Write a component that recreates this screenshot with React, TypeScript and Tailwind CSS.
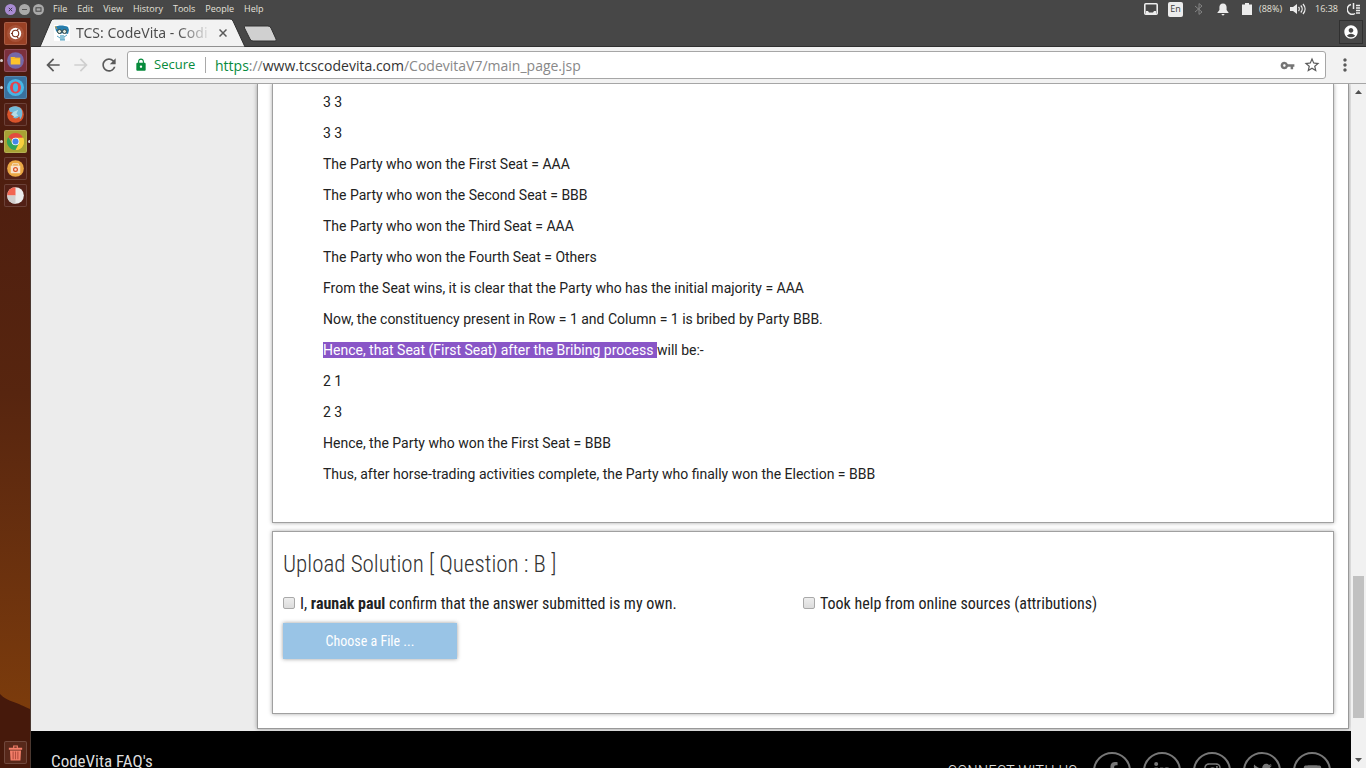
import React from "react";
import { FaFacebookF, FaLinkedinIn, FaInstagram, FaTwitter, FaYoutube } from "react-icons/fa";
import { MdAccountCircle, MdArrowBack, MdArrowForward, MdLock, MdMoreVert, MdRefresh, MdStarBorder, MdVpnKey } from "react-icons/md";

const menus = ["File", "Edit", "View", "History", "Tools", "People", "Help"];

const linesBefore = [
  "3 3",
  "3 3",
  "The Party who won the First Seat = AAA",
  "The Party who won the Second Seat = BBB",
  "The Party who won the Third Seat = AAA",
  "The Party who won the Fourth Seat = Others",
  "From the Seat wins, it is clear that the Party who has the initial majority = AAA",
  "Now, the constituency present in Row = 1 and Column = 1 is bribed by Party BBB.",
];

const linesAfter = [
  "2 1",
  "2 3",
  "Hence, the Party who won the First Seat = BBB",
  "Thus, after horse-trading activities complete, the Party who finally won the Election = BBB",
];

function WindowButtons() {
  return (
    <div className="flex gap-[3px] pl-[5px]">
      <button aria-label="Close" className="size-[11px]">
        <svg viewBox="0 0 11 11"><circle cx="5.5" cy="5.5" r="5.5" fill="#a98cd3" /><path d="M3.8 3.8l3.4 3.4M7.2 3.8L3.8 7.2" stroke="#3e3650" /></svg>
      </button>
      <button aria-label="Minimize" className="size-[11px]">
        <svg viewBox="0 0 11 11"><circle cx="5.5" cy="5.5" r="5.5" fill="#a9a9a9" /><path d="M3 5.5h5" stroke="#555" /></svg>
      </button>
      <button aria-label="Maximize" className="size-[11px]">
        <svg viewBox="0 0 11 11"><circle cx="5.5" cy="5.5" r="5.5" fill="#a9a9a9" /><rect x="3" y="3.8" width="5" height="3.4" fill="none" stroke="#444" /></svg>
      </button>
    </div>
  );
}

function TopBar() {
  return (
    <header className="flex h-[18px] shrink-0 items-center bg-[#474747] font-['Open_Sans',sans-serif] text-[9px] text-[#e4e1da]">
      <WindowButtons />
      <nav className="flex gap-[10px] pl-[9px]">
        {menus.map((m) => <button key={m}>{m}</button>)}
      </nav>
      <div className="ml-auto flex items-center pr-[5px]">
        <svg className="mr-[10px] h-3 w-[14px]" viewBox="0 0 14 12"><rect x=".8" y=".8" width="12.4" height="10.4" rx="1" fill="none" stroke="#ececec" strokeWidth="1.6" /><path d="M2 8h2l1 1.500h4L10 8h2v3H2z" fill="#ececec" /></svg>
        <span className="mr-[11px] flex h-[15px] w-[15px] items-center justify-center rounded-[2px] bg-[#ececec] text-[#3c3c3c]">En</span>
        <svg className="mr-[13px] h-3 w-[10px]" viewBox="0 0 10 12" fill="none" stroke="#858585"><path d="M1 3l7 6-3 2.4V.6L8 3 1 9" /></svg>
        <svg className="mr-[13px] h-[13px] w-3" viewBox="0 0 12 13" fill="#ececec"><path d="M6 .5c2.6 0 3.6 1.7 3.6 4v2.6L11.8 10H.2l2.2-2.900V4.500C2.400 2.200 3.400.5 6 .5zM4.200 11h3.600L6 12.800z" /></svg>
        <svg className="mr-[7px] h-3 w-[10px]" viewBox="0 0 10 12" fill="#ececec"><path d="M0 1.500h3V0h4v1.500h3V12H0z" /></svg>
        <span className="mr-[8px]">(88%)</span>
        <svg className="mr-[9px] h-3 w-4" viewBox="0 0 16 12" fill="none" stroke="#ececec" strokeWidth="1.300"><path d="M0 4h3l4-3v10L3 8H0z" fill="#ececec" stroke="none" /><path d="M8.500 4c1 1 1 3 0 4M10.800 2.500c1.800 2 1.800 5 0 7M13 1c2.700 3 2.700 7 0 10" /></svg>
        <span className="mr-[9px]">16:38</span>
        <svg className="h-3 w-[14px]" viewBox="0 0 14 12" fill="none" stroke="#ececec" strokeWidth="1.500"><path d="M4 1.500a5 5 0 1 0 4 9M6.500 0v6M9 2.500h4M9 5h4M9 7.500h4M9 10h4" /></svg>
      </div>
    </header>
  );
}

function Tile({ label, tile, marks, children }: { label: string; tile: string; marks?: string; children: React.ReactNode }) {
  return (
    <button aria-label={label} className={`relative flex size-[23px] items-center justify-center rounded-[2px] border border-white/15 ${tile}`}>
      <svg viewBox="0 0 20 20" className="size-[19px]">{children}</svg>
      {marks && <span className="absolute top-[9px] -left-[5px] size-[3px] rounded-full bg-white/80" />}
      {marks === "both" && <span className="absolute top-[9px] -right-[5px] size-[3px] rounded-full bg-white/80" />}
    </button>
  );
}

function Launcher() {
  return (
    <aside className="relative flex w-[31px] shrink-0 flex-col items-center gap-1 overflow-hidden border-r border-[#4b3830] bg-linear-to-b from-[#48190f] via-[#57250f] to-[#83400a] pt-1 pb-1">
      <svg className="absolute bottom-0 left-0 h-[115px] w-full" viewBox="0 0 31 115" preserveAspectRatio="none"><path d="M0 41c4 4 8 6 14 8 6 2 10 4 17 7v59H0z" fill="#46190b" /></svg>
      <Tile label="Search your computer" tile="bg-[#9a4125]">
        <circle cx="10" cy="10" r="9" fill="#b9694f" opacity=".45" /><circle cx="10" cy="10" r="6" fill="#fff" /><circle cx="10" cy="10" r="3.400" fill="none" stroke="#7b3421" strokeWidth="1.200" /><path d="M5.200 10h2M11.800 6.700l1-1.700M11.800 13.300l1 1.700" stroke="#7b3421" strokeWidth="1.300" />
      </Tile>
      <Tile label="Files" tile="bg-[#7c303d]" marks="left">
        <circle cx="10" cy="10" r="8.800" fill="#7569a8" /><path d="M5 6.200h4l1 1h5v7H5z" fill="#fdc52c" /><path d="M5 7.500h10" stroke="#e9a51e" strokeWidth=".6" />
      </Tile>
      <Tile label="Opera" tile="bg-[#3a719e]" marks="left">
        <circle cx="10" cy="10" r="9" fill="#46b5e5" /><ellipse cx="10" cy="10" rx="5.800" ry="6.300" fill="#e4434e" /><ellipse cx="10" cy="10" rx="2.700" ry="4.500" fill="#46b5e5" />
      </Tile>
      <Tile label="Firefox" tile="bg-[#522016]">
        <circle cx="10" cy="10" r="8.800" fill="#d9542b" /><path d="M3 4c2-3 8-4 12-1 3 3 3 9 0 12-1-1 0-2-1-3-2 2-4 3-7 1l2-1-4-2 2-2-3-1z" fill="#72bada" /><path d="M8 7l5-2-2 4 2 2-4 2-3-3z" fill="#b5dce6" />
      </Tile>
      <Tile label="Chrome" tile="bg-[#a8a234]" marks="both">
        <path d="M10 10L2.200 5.500A9 9 0 0 1 17.800 5.500z" fill="#e24b3f" /><path d="M10 10l8-4A9 9 0 0 1 10 19z" fill="#f9cf3d" /><path d="M10 6h8a9 9 0 0 1-8 13l3.500-7z" fill="#f9cf3d" /><path d="M2.200 5.500L6.500 12l7 0L10 19A9 9 0 0 1 2.200 5.500z" fill="#31a457" /><circle cx="10" cy="10" r="4" fill="#fff" /><circle cx="10" cy="10" r="3.200" fill="#4385e8" />
      </Tile>
      <Tile label="Software" tile="bg-[#522016]">
        <circle cx="10" cy="10" r="8.800" fill="#eba844" /><path d="M5 7h10v8H5z" fill="#f8e4cd" /><path d="M7 7V5h6v2" fill="none" stroke="#f8e4cd" /><circle cx="10" cy="11" r="2" fill="none" stroke="#db5428" strokeWidth="1.300" />
      </Tile>
      <Tile label="Disk usage" tile="bg-[#522016]">
        <circle cx="10" cy="10" r="8.800" fill="#ececec" /><path d="M10 10V1.200A8.800 8.800 0 0 0 1.200 10z" fill="#f26552" /><path d="M10 10v8.800A8.800 8.800 0 0 1 1.200 10z" fill="#d1cfce" />
      </Tile>
      <div className="mt-auto">
        <Tile label="Trash" tile="bg-[#57281a]">
          <path d="M3 5h14v2H3zM7.500 2.500h5V5h-1.200V3.800H8.700V5H7.500zM4.200 8h11.600l-.6 10.500H4.800z" fill="#f37e69" /><path d="M7.500 9v8M10 9v8M12.500 9v8" stroke="#b54d3e" strokeWidth="1.200" />
        </Tile>
      </div>
    </aside>
  );
}

function TabStrip() {
  return (
    <div className="flex h-[29px] shrink-0 border-b border-[#2f2f2f] bg-[#474747]">
      <div className="relative ml-[9px] h-[29px] w-[206px]">
        <svg className="absolute inset-0 h-[29px] w-[206px]" viewBox="0 0 206 29"><path d="M0 29L11 3q1-2 3-2h176q2 0 3 2l12 26z" fill="#f2f2f2" stroke="#2f2f2f" /></svg>
        <div className="relative flex h-full items-center pl-[14px]">
          <svg className="size-4" viewBox="0 0 16 16"><path fill="#fff" d="M0 0h16v16H0z" /><path d="M1 2c3-2 9-2 13 0l1 3-1 4-4-1-5 1-3-3z" fill="#267dad" /><circle cx="5.500" cy="6.500" r="2" fill="#e0e8dc" stroke="#344747" /><circle cx="10.500" cy="6.500" r="2" fill="#e0e8dc" stroke="#344747" /><path d="M6 10h4l1 5H6z" fill="#8bc4d9" /><path d="M3 11l3 2M13 10l-3 2M6 15h5" stroke="#59a4c2" /><path d="M1 1l2 3" stroke="#c79f48" /></svg>
          <span className="ml-[6px] w-[136px] overflow-hidden bg-linear-to-r from-[#4b4b4b] from-75% to-transparent bg-clip-text text-[14px] leading-5 whitespace-nowrap text-transparent">TCS: CodeVita - Codi</span>
          <button aria-label="Close tab" className="ml-[7px]"><svg className="size-2" viewBox="0 0 8 8"><path d="M.5.5l7 7M7.500.5l-7 7" stroke="#5a5a5a" strokeWidth="1.500" /></svg></button>
        </div>
      </div>
      <button aria-label="New tab" className="-ml-[3px] self-start pt-[7px]">
        <svg className="h-[17px] w-[36px]" viewBox="0 0 36 17"><path d="M2 1h23q2 0 3 2l5 11q1 2-1 2H10q-2 0-3-2L1.500 3Q1 1 2 1z" fill="#d0d0d0" stroke="#303030" /></svg>
      </button>
      <button aria-label="Profile" className="mt-[2px] mr-[3px] ml-auto flex h-6 w-6 items-center justify-center border border-[#303030] text-[16px] text-white"><MdAccountCircle /></button>
    </div>
  );
}

function Toolbar() {
  return (
    <div className="flex h-[37px] shrink-0 items-center border-b border-[#a6a6a6] bg-[#f2f2f2] pr-[13px] pl-[12px] text-[20px] text-[#5a5a5a]">
      <button aria-label="Back"><MdArrowBack /></button>
      <button aria-label="Forward" className="ml-2 text-[#cfcfcf]"><MdArrowForward /></button>
      <button aria-label="Reload" className="ml-2"><MdRefresh /></button>
      <div className="ml-2 flex h-7 min-w-0 flex-1 items-center rounded-[3px] border border-[#a6a6a6] bg-white pr-1 pl-[6px] font-['Open_Sans',sans-serif] text-[14px]">
        <MdLock className="text-[14px] text-[#078b3c]" />
        <span className="ml-[6px] w-[44px] text-[13px] text-[#078b3c]">Secure</span>
        <span className="mx-[7px] h-4 w-px bg-[#a9a9a9]" />
        <span className="ml-[2px] flex-1 truncate text-[#888]"><span className="text-[#078b3c]">https</span>://<span className="text-[#333]">www.tcscodevita.com</span>/CodevitaV7/main_page.jsp</span>
        <button aria-label="Saved password"><MdVpnKey className="text-[15px] text-[#757575]" /></button>
        <button aria-label="Bookmark" className="ml-2"><MdStarBorder className="text-[18px]" /></button>
      </div>
      <button aria-label="Menu" className="-mr-[2px] ml-[9px]"><MdMoreVert className="text-[20px]" /></button>
    </div>
  );
}

function Scrollbar() {
  return (
    <div className="flex w-[15px] shrink-0 flex-col items-center bg-[#f1f1f1]">
      <svg className="mt-[6px] h-1 w-[7px] shrink-0" viewBox="0 0 7 4"><path d="M0 4L3.500 0 7 4z" fill="#505050" /></svg>
      <div className="flex-1" />
      <div className="h-[142px] w-[11px] bg-[#c1c1c1]" />
      <svg className="mt-[40px] mb-[6px] h-1 w-[7px] shrink-0" viewBox="0 0 7 4"><path d="M0 0l3.500 4L7 0z" fill="#505050" /></svg>
    </div>
  );
}

function Question() {
  return (
    <section className="border border-t-0 border-[#a0a0a0] bg-white pt-2 pr-[50px] pb-[37px] pl-[50px] font-[Roboto,sans-serif] text-[14px] leading-[21px] text-[#222] shadow-[0_0_4px_rgba(0,0,0,0.35)]">
      <div className="flex flex-col gap-[10px]">
        {linesBefore.map((line, i) => <p key={i}>{line}</p>)}
        <p><mark className="bg-[#8956c7] text-white">Hence, that Seat (First Seat) after the Bribing process </mark>will be:-</p>
        {linesAfter.map((line, i) => <p key={i}>{line}</p>)}
      </div>
    </section>
  );
}

function Upload() {
  return (
    <section className="mt-2 h-[183px] border border-[#a0a0a0] bg-white px-[10px] pt-[17px] text-[#222] shadow-[0_0_4px_rgba(0,0,0,0.35)]">
      <h2 className="text-[23px] leading-8 font-light text-[#333]">Upload Solution [ Question : B ]</h2>
      <div className="mt-[11px] grid grid-cols-2 text-[16px] leading-6">
        <label className="flex items-center gap-[5px]">
          <input type="checkbox" className="-mt-[3px] size-3 appearance-none rounded-[2px] border border-[#a9a9a9] bg-linear-to-b from-[#ededed] to-[#dcdcdc]" />
          <span>I, <b>raunak paul</b> confirm that the answer submitted is my own.</span>
        </label>
        <label className="flex items-center gap-[5px]">
          <input type="checkbox" className="-mt-[3px] size-3 appearance-none rounded-[2px] border border-[#a9a9a9] bg-linear-to-b from-[#ededed] to-[#dcdcdc]" />
          <span>Took help from online sources (attributions)</span>
        </label>
      </div>
      <button className="mt-[7px] h-9 w-[174px] bg-[#99c4e6] text-[14px] text-white shadow-[0_0_4px_rgba(0,0,0,0.4)]">Choose a File ...</button>
    </section>
  );
}

function Footer() {
  const links = [
    { label: "Facebook", icon: <FaFacebookF /> },
    { label: "LinkedIn", icon: <FaLinkedinIn /> },
    { label: "Instagram", icon: <FaInstagram /> },
    { label: "Twitter", icon: <FaTwitter /> },
    { label: "YouTube", icon: <FaYoutube /> },
  ];
  return (
    <footer className="mt-[2px] flex h-20 shrink-0 items-start justify-between bg-black pr-5 pl-5 text-[17px] leading-5 text-[#dedede]">
      <a href="#faq" className="mt-5">CodeVita FAQ's</a>
      <div className="mt-[21px] flex items-center">
        <span className="mr-4 font-light">CONNECT WITH US</span>
        <div className="flex gap-3">
          {links.map((l) => <a key={l.label} href="#social" aria-label={l.label} className="flex size-[38px] items-center justify-center rounded-full border-2 border-[#777] text-[19px] text-[#777]">{l.icon}</a>)}
        </div>
      </div>
    </footer>
  );
}

export default function App() {
  return (
    <div className="flex h-screen flex-col overflow-hidden bg-[#ececec] font-['Noto_Sans',sans-serif]">
      <TopBar />
      <div className="flex min-h-0 flex-1">
        <Launcher />
        <div className="flex min-w-0 flex-1 flex-col">
          <TabStrip />
          <Toolbar />
          <div className="flex min-h-0 flex-1">
            <main className="flex min-w-0 flex-1 flex-col overflow-hidden font-['Roboto_Condensed','Liberation_Sans_Narrow',Roboto,sans-serif]">
              <div className="mr-[2px] ml-[226px] shrink-0 border border-t-0 border-[#999] bg-white px-[14px] pb-[14px] shadow-[0_0_4px_rgba(0,0,0,0.35)]">
                <Question />
                <Upload />
              </div>
              <Footer />
            </main>
            <Scrollbar />
          </div>
        </div>
      </div>
    </div>
  );
}
